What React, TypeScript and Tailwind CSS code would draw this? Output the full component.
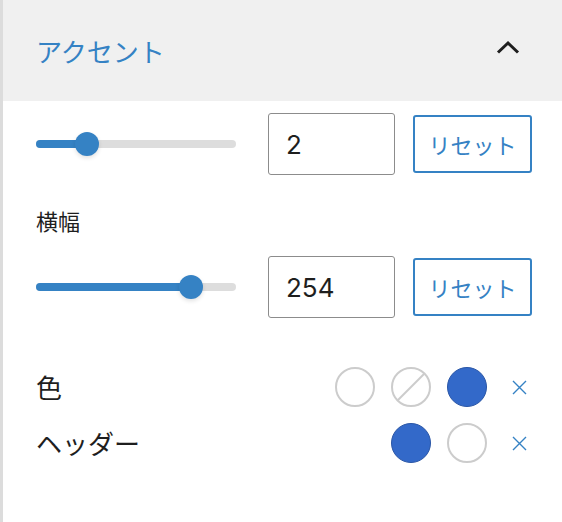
const jp = { fontFamily: '"Noto Sans CJK JP", "Noto Sans", sans-serif' };

function Slider({ fill }: { fill: number }) {
  return (
    <div className="relative w-[200px] h-[24px] flex items-center">
      <div className="w-full h-[8px] rounded-full bg-[#dddddd] overflow-hidden">
        <div className="h-full bg-[#3582c4]" style={{ width: fill }} />
      </div>
      <div
        className="absolute top-0 w-[24px] h-[24px] rounded-full bg-[#3582c4] shadow-[0_2px_4px_rgba(0,0,0,0.12)]"
        style={{ left: fill - 12 }}
      />
    </div>
  );
}

function NumberRow({ value, fill }: { value: string; fill: number }) {
  return (
    <div className="flex items-center h-[62px]">
      <Slider fill={fill} />
      <div
        className="ml-[32px] w-[127px] h-[62px] border border-[#8c8c8c] rounded-[3px] flex items-center pl-[17px] text-[26px] text-[#1e1e1e]"
        style={{ fontFamily: 'Inter, "Liberation Sans", sans-serif' }}
      >
        {value}
      </div>
      <button
        className="ml-[18px] w-[119px] h-[58px] border-2 border-[#3582c4] rounded-[3px] text-[22px] text-[#3582c4] flex items-center justify-center"
        style={jp}
      >
        リセット
      </button>
    </div>
  );
}

function Swatch({ kind }: { kind: 'empty' | 'none' | 'blue' }) {
  if (kind === 'blue') {
    return <div className="w-[40px] h-[40px] rounded-full bg-[#3369c9] border border-[#2a56a6]" />;
  }
  return (
    <svg width="40" height="40" viewBox="0 0 40 40">
      <circle cx="20" cy="20" r="19" fill="white" stroke="#cccccc" strokeWidth="2" />
      {kind === 'none' && <line x1="6.5" y1="33.5" x2="33.5" y2="6.5" stroke="#cccccc" strokeWidth="2" />}
    </svg>
  );
}

function Clear() {
  return (
    <svg width="15" height="15" viewBox="0 0 15 15" className="ml-[25px]">
      <path d="M1 1 L14 14 M14 1 L1 14" stroke="#3582c4" strokeWidth="1.4" fill="none" />
    </svg>
  );
}

function ColorRow({ label, swatches }: { label: string; swatches: ('empty' | 'none' | 'blue')[] }) {
  return (
    <div className="flex items-center justify-between h-[40px] pr-[5px]">
      <span className="text-[26px] text-[#1e1e1e] leading-none" style={jp}>{label}</span>
      <div className="flex items-center">
        <div className="flex items-center gap-[16px]">
          {swatches.map((s, i) => (
            <Swatch key={i} kind={s} />
          ))}
        </div>
        <Clear />
      </div>
    </div>
  );
}

export default function App() {
  return (
    <div className="w-[562px] h-[522px] bg-white border-l-[3px] border-[#dcdcdc] overflow-hidden">
      <div className="h-[101px] bg-[#f0f0f0] flex items-center justify-between pl-[33px] pr-[42px]">
        <span className="text-[26px] text-[#3582c4]" style={jp}>アクセント</span>
        <svg width="24" height="14" viewBox="0 0 24 14" className="mb-[7px]">
          <polyline points="2,12.5 12,3 22,12.5" fill="none" stroke="#1e1e1e" strokeWidth="3" />
        </svg>
      </div>

      <div className="pl-[33px] pr-[30px]">
        <div className="mt-[12px]">
          <NumberRow value="2" fill={51} />
        </div>

        <div className="mt-[30px] h-[30px] leading-[30px] text-[22px] text-[#1e1e1e]" style={jp}>
          横幅
        </div>

        <div className="mt-[21px]">
          <NumberRow value="254" fill={155} />
        </div>

        <div className="mt-[49px]">
          <ColorRow label="色" swatches={['empty', 'none', 'blue']} />
        </div>
        <div className="mt-[16px]">
          <ColorRow label="ヘッダー" swatches={['blue', 'empty']} />
        </div>
      </div>
    </div>
  );
}
